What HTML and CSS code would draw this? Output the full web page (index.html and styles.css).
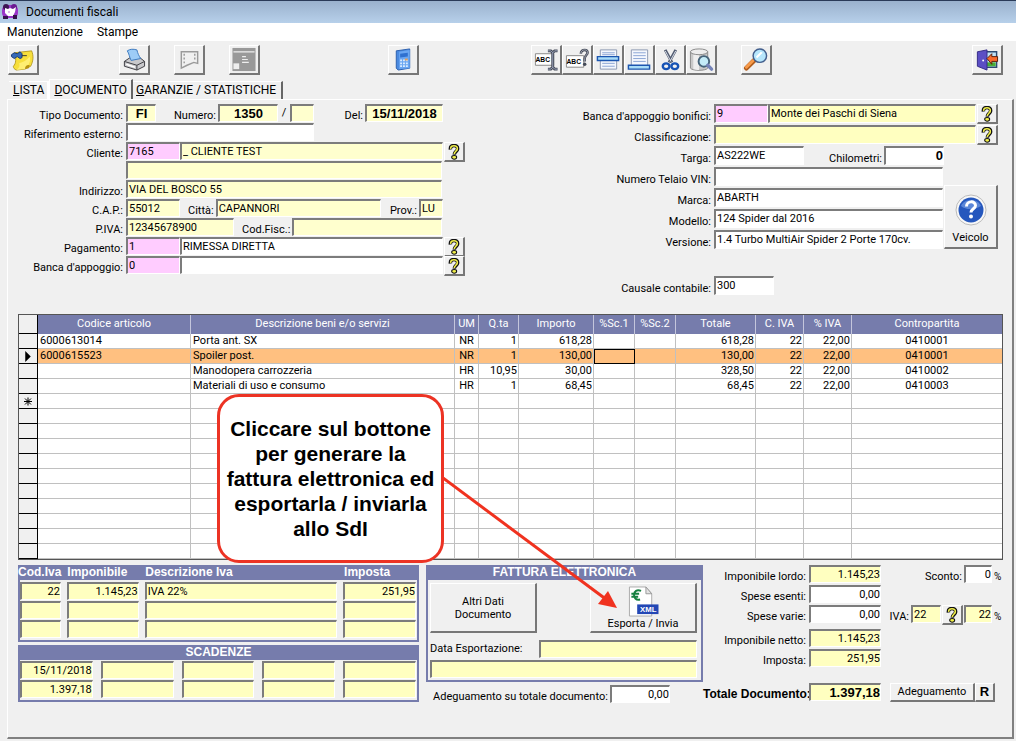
FILE: index.html
```html
<!DOCTYPE html>
<html lang="it">
<head>
<meta charset="utf-8">
<title>Documenti fiscali</title>
<link rel="stylesheet" href="styles.css">
</head>
<body>
<svg class="defs" aria-hidden="true">
  <symbol id="help" viewBox="0 0 12 18">
    <path d="M2 6.200C1.600 2.800 3.400 1.700 6 1.700S10.300 3 10 5.800C9.800 8.300 6.400 8.500 6.300 12" fill="none" stroke="#111" stroke-width="4"/>
    <path d="M2.300 5.500C2.100 3 3.600 1.900 6 1.900S10 3.200 9.700 5.500C9.500 8 6.300 8.500 6.300 11.300" fill="none" stroke="#f2f04a" stroke-width="1.800"/>
    <ellipse cx="6.200" cy="15" rx="2.800" ry="2.100" fill="#f2f04a" stroke="#111" stroke-width="1.200"/>
  </symbol>
</svg>

<header class="titlebar">
  <svg class="app-icon" viewBox="0 0 16 16"><rect x="0" y="1" width="16" height="13" rx="5" fill="#9a35c8"/><circle cx="4" cy="3" r="3" fill="#3d1552"/><circle cx="12" cy="3" r="3" fill="#6a1a90"/><path d="M3 4l3 1 2-1 3 1 3-2-1 5-2 4H6L3 9z" fill="#fff"/><path d="M1 12h5v3H1zM11 11h4v4h-4z" fill="#35104a"/><circle cx="7" cy="8" r="1" fill="#d9a0e8"/></svg>
  <h1 class="title">Documenti fiscali</h1>
</header>
<nav class="menubar">
  <button class="menu">Manutenzione</button>
  <button class="menu">Stampe</button>
</nav>

<div class="toolbar">
  <button class="tool" aria-label="Note"><svg viewBox="0 0 26 26"><path d="M4 6l18-2c2 5 2 10-1 16l-6 3-9 1c-2-1-3-2-3-4 3-3 3-8 1-14z" fill="#f7df3c" stroke="#a98b10" stroke-width=".8"/><path d="M9 17c4-1 8-3 11-7 1 4 0 9-5 13l-9 1c3-2 4-4 3-7z" fill="#ffef72"/><path d="M15 23c0-3 2-5 5-4l-1 3z" fill="#b89310"/><path d="M1 8l3-2 3 1 3-2 2 2v4l-2 1-3-2-3 2-3-2z" fill="#3569b8" stroke="#143777"/><path d="M12 9h5" stroke="#333"/></svg></button>
  <button class="tool tool-print" aria-label="Stampa"><svg viewBox="0 0 26 26"><path d="M3 15l6-4h10l5 4v5l-8 4-13-4z" fill="#c9c9cc" stroke="#3c3c42"/><path d="M6 4c3-2 6-2 10-1 1 4 2 6 4 9l-10 2C8 10 8 7 6 4z" fill="#9dccf7" stroke="#3b79be"/><path d="M3 15l13 4 8-4M16 19v5" fill="none" stroke="#3c3c42"/><path d="M5 18l9 3" stroke="#fff" stroke-width="1.500"/></svg></button>
  <button class="tool gap-m" aria-label="Anteprima" disabled><svg viewBox="0 0 26 26"><path d="M5 5h17v12l-4-1-7 3-6 3z" fill="none" stroke="#9a9a9a" stroke-width="1.500"/><path d="M8 7v11M19 7v8" stroke="#9a9a9a" stroke-width="1.500" stroke-dasharray="2 2"/></svg></button>
  <button class="tool gap-m" aria-label="Finestra" disabled><svg viewBox="0 0 26 26"><path d="M1 1h24v24H1z" fill="#999"/><path d="M2 5h22M11 10h4M11 13h6M11 16h7" stroke="#eee" stroke-width="1.200"/><path d="M2 17h6v6H2z" fill="#eee"/></svg></button>
  <button class="tool gap-xl" aria-label="Calcolatrice"><svg viewBox="0 0 26 26"><path d="M6 4l14-2v20L8 24l-2-2z" fill="#4a8ae0" stroke="#2b5fae"/><path d="M9 5l11-2v19L9 23z" fill="#6aa6f2"/><path d="M10 7l8-1v4l-8 1z" fill="#2f70cf"/><path d="M10 14h8M10 17h8M10 20h8" stroke="#d9ebff" stroke-width="1.800" stroke-dasharray="2 1"/><path d="M15 12h3v2h-3z" fill="#e0a060"/></svg></button>
  <button class="tool gap-l" aria-label="Rinomina"><svg viewBox="0 0 26 26"><path d="M2 7h19v12H2z" fill="#fff" stroke="#888"/><text class="abc" x="2" y="16">ABC</text><path d="M15 4h3l2 2 2-2h3M15 23h3l2-2 2 2h3M20 5v17" fill="none" stroke="#444a58" stroke-width="3"/><path d="M15 4h3l2 2 2-2h3M15 23h3l2-2 2 2h3M20 5v17" fill="none" stroke="#9aa2b8"/></svg></button>
  <button class="tool" aria-label="Controllo testo"><svg viewBox="0 0 26 26"><path d="M2 9h18v12H2z" fill="#fff" stroke="#888"/><text class="abc" x="2" y="18">ABC</text><path d="M17 7c0-3 2-4 4-4s3 1 3 3-3 3-3 6v3" fill="none" stroke="#444a58" stroke-width="2.600"/><path d="M17 7c0-3 2-4 4-4s3 1 3 3-3 3-3 6v3" fill="none" stroke="#b3b8c6" stroke-width=".8"/><circle cx="21" cy="18" r="1.800" fill="#444a58"/></svg></button>
  <button class="tool" aria-label="Inserisci riga"><svg viewBox="0 0 26 26"><path d="M5 3h17v20H5z" fill="#f4f7fd" stroke="#8b98b2"/><path d="M7 6h13M7 8h13M7 17h13M7 20h13" stroke="#8aa4d4"/><path d="M2 10h22v4H2z" fill="#a8dcf8" stroke="#1c56b0" stroke-width="1.500"/></svg></button>
  <button class="tool" aria-label="Aggiungi riga"><svg viewBox="0 0 26 26"><path d="M5 3h17v18H5z" fill="#f4f7fd" stroke="#8b98b2"/><path d="M7 6h13M7 9h13M7 12h13M7 15h13" stroke="#8aa4d4"/><path d="M2 19h22v4H2z" fill="#a8dcf8" stroke="#1c56b0" stroke-width="1.500"/></svg></button>
  <button class="tool" aria-label="Taglia"><svg viewBox="0 0 26 26"><path d="M8 3l7 13M19 3l-7 13" stroke="#515b70" stroke-width="3"/><path d="M8 4l6 11M19 4l-6 11" stroke="#dde2ec"/><ellipse cx="9" cy="20" rx="3.500" ry="3" fill="none" stroke="#1753b5" stroke-width="2.500"/><ellipse cx="18" cy="20" rx="3.500" ry="3" fill="none" stroke="#1753b5" stroke-width="2.500"/></svg></button>
  <button class="tool" aria-label="Cerca in archivio"><svg viewBox="0 0 26 26"><path d="M2 5v17c2 3 16 3 18 0V5z" fill="#c9c9c9" stroke="#888"/><path d="M5 6v17c2 1 4 1 6 1V6z" fill="#eee"/><ellipse cx="11" cy="5" rx="9" ry="3" fill="#ededed" stroke="#888"/><circle cx="16" cy="15" r="5.500" fill="#c4ecf8" stroke="#46647a" stroke-width="2"/><path d="M20 19l4 4" stroke="#7584b8" stroke-width="3.500" stroke-linecap="round"/></svg></button>
  <button class="tool gap-m" aria-label="Cerca"><svg viewBox="0 0 26 26"><path d="M11 14l-8 8" stroke="#b05c1c" stroke-width="5" stroke-linecap="round"/><path d="M10 14l-7 7" stroke="#f79b4b" stroke-width="3" stroke-linecap="round"/><circle cx="17" cy="9" r="7" fill="#b6e6fc" stroke="#435f8d" stroke-width="1.500"/><path d="M13 10l5-5 2 1-6 6z" fill="#fff"/></svg></button>
  <button class="tool tool-exit" aria-label="Esci"><svg viewBox="0 0 26 26"><path d="M12 5h11v16H12z" fill="#bfe2f8" stroke="#2d4a70" stroke-width="1.500"/><path d="M13 16h9v4h-9z" fill="#49b035"/><path d="M3 5l10-2v21L3 20z" fill="#5b4fc4" stroke="#352b87"/><circle cx="9" cy="14" r="1" fill="#fff"/><path d="M13 12l5-5v3h6v5h-6v3z" fill="#f9692b" stroke="#5a1e08"/></svg></button>
</div>

<div class="tabs" role="tablist">
  <button class="tab tab-first" role="tab"><u>L</u>ISTA</button>
  <button class="tab tab-active" role="tab" aria-selected="true"><u>D</u>OCUMENTO</button>
  <button class="tab" role="tab"><u>G</u>ARANZIE / STATISTICHE</button>
</div>

<main class="panel">
  <form class="form">
    <div class="column">
      <div class="row">
        <label class="caption" for="tipo">Tipo Documento:</label>
        <input class="field pale bold center w30" id="tipo" value="FI">
        <label class="sub far" for="numero">Numero:</label>
        <input class="field pale bold center w60" id="numero" value="1350">
        <span class="slash">/</span>
        <input class="field pale w24" aria-label="Suffisso numero">
        <label class="sub push" for="del">Del:</label>
        <input class="field pale bold center w78" id="del" value="15/11/2018">
        <span class="space"></span>
      </div>
      <div class="row">
        <label class="caption" for="rif">Riferimento esterno:</label>
        <input class="field w188" id="rif">
      </div>
      <div class="row">
        <label class="caption" for="cliente">Cliente:</label>
        <input class="field pink w54" id="cliente" value="7165">
        <input class="field pale grow" aria-label="Nome cliente" value="_ CLIENTE TEST">
        <button type="button" class="ask" aria-label="Cerca cliente"><svg><use href="#help"/></svg></button>
      </div>
      <div class="row">
        <span class="caption"></span>
        <input class="field pale grow" aria-label="Nome cliente, seconda riga">
        <span class="space"></span>
      </div>
      <div class="row">
        <label class="caption" for="indirizzo">Indirizzo:</label>
        <input class="field pale grow" id="indirizzo" value="VIA DEL BOSCO 55">
        <span class="space"></span>
      </div>
      <div class="row">
        <label class="caption" for="cap">C.A.P.:</label>
        <input class="field pale w54" id="cap" value="55012">
        <label class="sub near" for="citta">Città:</label>
        <input class="field pale grow" id="citta" value="CAPANNORI">
        <label class="sub near" for="prov">Prov.:</label>
        <input class="field pale w24" id="prov" value="LU">
        <span class="space"></span>
      </div>
      <div class="row">
        <label class="caption" for="piva">P.IVA:</label>
        <input class="field pale w108" id="piva" value="12345678900">
        <label class="sub near" for="cf">Cod.Fisc.:</label>
        <input class="field pale grow" id="cf">
        <span class="space"></span>
      </div>
      <div class="row">
        <label class="caption" for="pagamento">Pagamento:</label>
        <input class="field pink w54" id="pagamento" value="1">
        <input class="field grow" aria-label="Descrizione pagamento" value="RIMESSA DIRETTA">
        <button type="button" class="ask" aria-label="Cerca pagamento"><svg><use href="#help"/></svg></button>
      </div>
      <div class="row">
        <label class="caption" for="banca">Banca d'appoggio:</label>
        <input class="field pink w54" id="banca" value="0">
        <input class="field grow" aria-label="Descrizione banca">
        <button type="button" class="ask" aria-label="Cerca banca"><svg><use href="#help"/></svg></button>
      </div>
    </div>

    <div class="column column-right">
      <div class="row">
        <label class="caption wide" for="bonifici">Banca d'appoggio bonifici:</label>
        <input class="field pink w54" id="bonifici" value="9">
        <input class="field yellow grow" aria-label="Nome banca" value="Monte dei Paschi di Siena">
        <button type="button" class="ask" aria-label="Cerca banca bonifici"><svg><use href="#help"/></svg></button>
      </div>
      <div class="row">
        <label class="caption wide" for="classe">Classificazione:</label>
        <input class="field yellow grow" id="classe">
        <button type="button" class="ask" aria-label="Cerca classificazione"><svg><use href="#help"/></svg></button>
      </div>
      <div class="vehicle">
        <div class="column-right vehicle-fields">
          <div class="row">
            <label class="caption wide" for="targa">Targa:</label>
            <input class="field w90" id="targa" value="AS222WE">
            <label class="sub push" for="km">Chilometri:</label>
            <input class="field bold right w60" id="km" value="0">
          </div>
          <div class="row"><label class="caption wide" for="vin">Numero Telaio VIN:</label><input class="field grow" id="vin"></div>
          <div class="row"><label class="caption wide" for="marca">Marca:</label><input class="field grow" id="marca" value="ABARTH"></div>
          <div class="row"><label class="caption wide" for="modello">Modello:</label><input class="field grow" id="modello" value="124 Spider dal 2016"></div>
          <div class="row"><label class="caption wide" for="versione">Versione:</label><input class="field grow" id="versione" value="1.4 Turbo MultiAir Spider 2 Porte 170cv."></div>
        </div>
        <button type="button" class="button vehicle-button">
          <svg class="vehicle-icon" viewBox="0 0 32 32"><circle cx="16" cy="16" r="15" fill="#f8f8f8" stroke="#bbb"/><circle cx="16" cy="16" r="12.500" fill="#2557bd"/><path d="M6 12c3-8 17-8 20 0-5 3-14 5-20 0z" fill="#5b87d8"/><path d="M11.500 12.500c0-6 9-6 9-1 0 3.500-4.500 3-4.500 7" fill="none" stroke="#fff" stroke-width="3"/><circle cx="16" cy="22.500" r="2" fill="#fff"/></svg>
          Veicolo
        </button>
      </div>
      <div class="row causale">
        <label class="caption wide" for="causale">Causale contabile:</label>
        <input class="field w60" id="causale" value="300">
      </div>
    </div>
  </form>

  <section class="detail">
    <table class="grid">
      <colgroup><col class="c20"><col class="c153"><col><col class="c24"><col class="c40"><col class="c75"><col class="c41"><col class="c41"><col class="c80"><col class="c48"><col class="c48"><col class="c151"></colgroup>
      <thead><tr><th class="sel"></th><th>Codice articolo</th><th>Descrizione beni e/o servizi</th><th>UM</th><th>Q.ta</th><th>Importo</th><th>%Sc.1</th><th>%Sc.2</th><th>Totale</th><th>C. IVA</th><th>% IVA</th><th>Contropartita</th></tr></thead>
      <tbody>
        <tr><td class="sel"></td><td>6000613014</td><td>Porta ant. SX</td><td class="mid">NR</td><td class="num">1</td><td class="num">618,28</td><td></td><td></td><td class="num">618,28</td><td class="num">22</td><td class="num">22,00</td><td class="mid">0410001</td></tr>
        <tr class="current"><td class="sel"><svg class="mark" viewBox="0 0 8 12"><path d="M1 0l6 6-6 6z"/></svg></td><td>6000615523</td><td>Spoiler post.</td><td class="mid">NR</td><td class="num">1</td><td class="num">130,00</td><td class="focus"></td><td></td><td class="num">130,00</td><td class="num">22</td><td class="num">22,00</td><td class="mid">0410001</td></tr>
        <tr><td class="sel"></td><td></td><td>Manodopera carrozzeria</td><td class="mid">HR</td><td class="num">10,95</td><td class="num">30,00</td><td></td><td></td><td class="num">328,50</td><td class="num">22</td><td class="num">22,00</td><td class="mid">0410002</td></tr>
        <tr><td class="sel"></td><td></td><td>Materiali di uso e consumo</td><td class="mid">HR</td><td class="num">1</td><td class="num">68,45</td><td></td><td></td><td class="num">68,45</td><td class="num">22</td><td class="num">22,00</td><td class="mid">0410003</td></tr>
        <tr><td class="sel"><svg class="mark" viewBox="0 0 10 10"><path d="M5 1v8M1 5h8M2 2l6 6M8 2L2 8" stroke="#000"/></svg></td><td></td><td></td><td></td><td></td><td></td><td></td><td></td><td></td><td></td><td></td><td></td></tr>
        <tr><td class="sel"></td><td></td><td></td><td></td><td></td><td></td><td></td><td></td><td></td><td></td><td></td><td></td></tr>
        <tr><td class="sel"></td><td></td><td></td><td></td><td></td><td></td><td></td><td></td><td></td><td></td><td></td><td></td></tr>
        <tr><td class="sel"></td><td></td><td></td><td></td><td></td><td></td><td></td><td></td><td></td><td></td><td></td><td></td></tr>
        <tr><td class="sel"></td><td></td><td></td><td></td><td></td><td></td><td></td><td></td><td></td><td></td><td></td><td></td></tr>
        <tr><td class="sel"></td><td></td><td></td><td></td><td></td><td></td><td></td><td></td><td></td><td></td><td></td><td></td></tr>
        <tr><td class="sel"></td><td></td><td></td><td></td><td></td><td></td><td></td><td></td><td></td><td></td><td></td><td></td></tr>
        <tr><td class="sel"></td><td></td><td></td><td></td><td></td><td></td><td></td><td></td><td></td><td></td><td></td><td></td></tr>
        <tr><td class="sel"></td><td></td><td></td><td></td><td></td><td></td><td></td><td></td><td></td><td></td><td></td><td></td></tr>
        <tr><td class="sel"></td><td></td><td></td><td></td><td></td><td></td><td></td><td></td><td></td><td></td><td></td><td></td></tr>
        <tr><td class="sel"></td><td></td><td></td><td></td><td></td><td></td><td></td><td></td><td></td><td></td><td></td><td></td></tr>
      </tbody>
    </table>
    <aside class="callout">Cliccare sul bottone per generare la fattura elettronica ed esportarla / inviarla allo SdI</aside>
    <svg class="arrow" viewBox="0 0 180 140"><path d="M0 4L164 126" stroke="#f0321f" stroke-width="3"/><path d="M174 134l-19-4 10-13z" fill="#f0321f"/></svg>
  </section>

  <section class="bottom">
    <div class="stack stack-left">
      <div class="box">
        <div class="box-head iva-cols"><span>Cod.Iva</span><span>Imponibile</span><span>Descrizione Iva</span><span>Imposta</span></div>
        <div class="box-body iva-cols">
          <input class="field yellow right" aria-label="Codice IVA 1" value="22"><input class="field yellow right" aria-label="Imponibile 1" value="1.145,23"><input class="field yellow" aria-label="Descrizione IVA 1" value="IVA 22%"><input class="field yellow right" aria-label="Imposta 1" value="251,95">
          <input class="field yellow" aria-label="Codice IVA 2"><input class="field yellow" aria-label="Imponibile 2"><input class="field yellow" aria-label="Descrizione IVA 2"><input class="field yellow" aria-label="Imposta 2">
          <input class="field yellow" aria-label="Codice IVA 3"><input class="field yellow" aria-label="Imponibile 3"><input class="field yellow" aria-label="Descrizione IVA 3"><input class="field yellow" aria-label="Imposta 3">
        </div>
      </div>
      <div class="box">
        <div class="box-head box-title">SCADENZE</div>
        <div class="box-body due-cols">
          <input class="field yellow right" aria-label="Data scadenza 1" value="15/11/2018"><input class="field yellow" aria-label="Data scadenza 2"><input class="field yellow" aria-label="Data scadenza 3"><input class="field yellow" aria-label="Data scadenza 4"><input class="field yellow" aria-label="Data scadenza 5">
          <input class="field yellow right" aria-label="Importo scadenza 1" value="1.397,18"><input class="field yellow" aria-label="Importo scadenza 2"><input class="field yellow" aria-label="Importo scadenza 3"><input class="field yellow" aria-label="Importo scadenza 4"><input class="field yellow" aria-label="Importo scadenza 5">
        </div>
      </div>
    </div>

    <div class="stack">
      <div class="box">
        <div class="box-head box-title">FATTURA ELETTRONICA</div>
        <div class="invoice">
          <div class="invoice-buttons">
            <button class="button invoice-button">Altri Dati<br>Documento</button>
            <button class="button invoice-button">
              <svg class="xml-icon" viewBox="0 0 32 32"><path d="M2 1h17l6 7v23H2z" fill="#fff" stroke="#aaa"/><path d="M19 1v7h6z" fill="#e4e4e4" stroke="#999"/><path d="M14 5c-9-4-10 11-1 9M4 8h8M4 11h7" fill="none" stroke="#168040" stroke-width="2"/><path d="M10 19h22v10H10z" fill="#2347b5"/><text class="xml-text" x="13" y="27">XML</text></svg>
              Esporta / Invia
            </button>
          </div>
          <div class="row">
            <label class="sub grow export-label" for="dataexp">Data Esportazione:</label>
            <input class="field yellow w158" id="dataexp">
          </div>
          <input class="field yellow" aria-label="Esito esportazione">
        </div>
      </div>
      <div class="row adjust">
        <label class="sub" for="adeg">Adeguamento su totale documento:</label>
        <input class="field right w60" id="adeg" value="0,00">
      </div>
    </div>

    <div class="totals">
      <div class="row">
        <label class="caption total" for="lordo">Imponibile lordo:</label>
        <input class="field yellow right w72" id="lordo" value="1.145,23">
        <label class="sub push" for="sconto">Sconto:</label>
        <input class="field right w28" id="sconto" value="0"><span class="percent">%</span>
      </div>
      <div class="row"><label class="caption total" for="esenti">Spese esenti:</label><input class="field right w72" id="esenti" value="0,00"></div>
      <div class="row">
        <label class="caption total" for="varie">Spese varie:</label>
        <input class="field right w72" id="varie" value="0,00">
        <label class="sub push" for="iva">IVA:</label>
        <input class="field yellow w30" id="iva" value="22">
        <button class="ask ask-rate" aria-label="Cerca aliquota"><svg><use href="#help"/></svg></button>
        <input class="field yellow right w28" aria-label="Aliquota IVA" value="22"><span class="percent">%</span>
      </div>
      <div class="row net"><label class="caption total" for="netto">Imponibile netto:</label><input class="field yellow right w72" id="netto" value="1.145,23"></div>
      <div class="row"><label class="caption total" for="imposta">Imposta:</label><input class="field yellow right w72" id="imposta" value="251,95"></div>
      <div class="row grand">
        <label class="caption total grand-label" for="totale">Totale Documento:</label>
        <input class="field yellow right bold w72" id="totale" value="1.397,18">
        <button class="button adjust-button">Adeguamento</button><button class="button bold r-button">R</button>
      </div>
    </div>
  </section>
</main>
</body>
</html>
```
FILE: styles.css
```css
* { box-sizing: border-box; }

body {
  margin: 0;
  min-height: 100vh;
  display: flex;
  flex-direction: column;
  background: #f0f0f0;
  color: #000;
  font: 11px/12px Roboto, "Liberation Sans", Arial, sans-serif;
}

button, input { font: inherit; color: inherit; margin: 0; }
.defs { position: absolute; width: 0; height: 0; }

/* Window chrome */
.titlebar {
  display: flex;
  align-items: center;
  gap: 8px;
  height: 23px;
  padding-left: 2px;
  border-top: 1px solid #2a3a58;
  background: linear-gradient(#9ab1cd, #b7d0ea);
}
.app-icon { width: 16px; height: 16px; }
.title { margin: 0; font: 12px/16px Roboto, "Noto Sans", sans-serif; }
.menubar { display: flex; gap: 14px; height: 18px; padding-left: 7px; background: #fff; }
.menu { padding: 0; border: 0; background: none; font: 12px/18px Roboto, "Noto Sans", sans-serif; }

.toolbar { display: flex; padding: 4px 13px 4px 8px; }
.tool {
  width: 31px;
  height: 30px;
  padding: 1px;
  border: solid;
  border-width: 1px 2px 2px 1px;
  border-color: #fff #777 #777 #fff;
  background: #f0f0f0;
}
.tool svg { display: block; width: 26px; height: 25px; }
.tool-print { margin-left: 80px; }
.gap-m { margin-left: 24px; }
.gap-l { margin-left: 112px; }
.gap-xl { margin-left: 128px; }
.tool-exit { margin-left: auto; }
.abc { font: bold 7px "Liberation Sans", sans-serif; }

.tabs { display: flex; align-items: flex-end; height: 20px; padding-left: 9px; }
.tab {
  height: 18px;
  padding: 0 5px 1px 3px;
  border: solid;
  border-width: 1px 2px 0 0;
  border-color: #fff #666 #fff #fff;
  background: #f0f0f0;
  font: 12px/15px Roboto, "Liberation Sans", sans-serif;
}
.tab-first { padding-left: 4px; padding-right: 3px; border-right-color: #fff; }
.tab-active { height: 20px; padding: 1px 4px 0; border-left-width: 1px; }

/* Document panel */
.panel {
  flex: 1;
  margin: 0 2px 2px 7px;
  padding: 4px 9px 20px 10px;
  border: solid;
  border-width: 1px 2px 2px 1px;
  border-color: #fff #808080 #808080 #fff;
}
.form {
  display: grid;
  grid-template-columns: 447fr 533fr;
  margin-right: 5px;
}
.column { display: flex; flex-direction: column; gap: 1px; min-width: 0; }
.column-right { display: flex; flex-direction: column; gap: 2px; min-width: 0; }
.column-right .row { height: 19px; }
.row { display: flex; height: 18px; align-items: stretch; }

.caption, .sub { align-self: flex-end; white-space: nowrap; padding-right: 2px; }
.caption { width: 108px; text-align: right; padding-right: 3px; flex: none; }
.caption.wide { width: 249px; }
.push { margin-left: auto; }
.near { margin-left: 8px; }
.far { margin-left: 18px; }
.slash { width: 12px; text-align: center; line-height: 18px; }
.space { width: 22px; flex: none; }
.grow { flex: 1; }

.field {
  min-width: 0;
  width: 100%;
  height: 18px;
  padding: 0 1px 1px;
  border: solid;
  border-width: 2px 1px 1px 2px;
  border-color: #7c7c7c #fff #fff #7c7c7c;
  border-radius: 0;
  background: #fff;
}
.column-right .field { height: 19px; }
.pale { background: #ffffce; }
.yellow { background: #ffffc0; }
.pink { background: #ffccff; }
.bold { font-family: "Liberation Sans", Arial, sans-serif; font-weight: bold; font-size: 13px; }
.right { text-align: right; padding-right: 0; }
.center { text-align: center; }

.field.grow { width: auto; margin-right: 1px; }
.w24, .w28, .w30, .w54, .w60, .w72, .w78, .w90, .w108, .w158, .w188 { flex: none; }
.w24 { width: 24px; }
.w28 { width: 28px; }
.w30 { width: 30px; }
.w54 { width: 54px; }
.w60 { width: 60px; }
.w72 { width: 72px; }
.w78 { width: 78px; }
.w90 { width: 90px; }
.w108 { width: 108px; }
.w158 { width: 158px; }
.w188 { width: 188px; }

.button, .ask {
  padding: 0;
  border: solid;
  border-width: 1px 2px 2px 1px;
  border-color: #fff #777 #777 #fff;
  background: #f0f0f0;
}
.ask { width: 21px; height: 20px; flex: none; }
.ask svg { display: block; width: 12px; height: 16px; margin: 0 auto; }
.ask-rate { margin: 0 1px; }

.vehicle { display: flex; align-items: flex-end; }
.vehicle-fields { flex: 1; }
.vehicle-button { display: flex; flex-direction: column; align-items: center; justify-content: flex-end; gap: 6px; width: 54px; height: 64px; padding-bottom: 3px; }
.vehicle-icon { width: 32px; height: 32px; }
.causale { margin-top: 25px; }

/* Item grid */
.detail { position: relative; margin-top: 19px; }
.grid {
  width: 100%;
  table-layout: fixed;
  border-collapse: separate;
  border-spacing: 0;
  border: 1px solid #555;
  background: #fff;
}
.grid th {
  height: 19px;
  padding: 0 0 2px;
  border-right: 1px solid #c4c6dc;
  background: #767cac;
  color: #fff;
  font-weight: normal;
}
.grid td {
  height: 15px;
  padding: 0 2px;
  border-right: 1px solid #c0c0c0;
  border-bottom: 1px solid #c0c0c0;
  line-height: 14px;
  white-space: nowrap;
  overflow: hidden;
}
.grid th:last-child, .grid td:last-child { border-right: 0; }
.grid .sel { padding: 0; border-right: 1px solid #000; border-bottom: 1px solid #000; background: #f0f0f0; text-align: center; }
.grid .num { text-align: right; padding-right: 1px; }
.grid .mid { text-align: center; padding: 0; }
.grid .current td:not(.sel) { background: #ffc080; }
.grid .current .focus { border: 1px solid #000; }
.mark { display: block; width: 10px; height: 11px; margin: 0 auto; }
.c20 { width: 19px; }
.c24 { width: 24px; }
.c40 { width: 40px; }
.c41 { width: 41px; }
.c48 { width: 48px; }
.c75 { width: 75px; }
.c80 { width: 80px; }
.c151 { width: 150px; }
.c153 { width: 153px; }

.callout {
  position: absolute;
  left: 199px;
  top: 80px;
  width: 227px;
  height: 169px;
  padding: 19px 2px;
  border: 3px solid #ec3324;
  border-radius: 22px;
  background: #fff;
  text-align: center;
  font: bold 21px/25px "Liberation Sans", Arial, sans-serif;
}
.arrow { position: absolute; left: 425px; top: 160px; width: 180px; height: 140px; }

/* Summary area */
.bottom { display: grid; grid-template-columns: 408fr 277fr 300fr; margin-top: 5px; }
.stack { display: flex; flex-direction: column; gap: 3px; min-width: 0; }
.stack-left { padding-right: 7px; }
.box { border: 2px solid #767cac; border-top: 0; background: #f0f0f0; }
.box-head { height: 15px; background: #767cac; color: #fff; font: bold 12px/14px "Liberation Sans", Arial, sans-serif; white-space: nowrap; }
.box-title { text-align: center; }
.iva-cols { display: grid; grid-template-columns: 41fr 72fr 193fr 73fr; column-gap: 6px; }
.box-head.iva-cols { margin-left: -2px; }
.due-cols { display: grid; grid-template-columns: repeat(5, 1fr); column-gap: 8px; }
.box-body { row-gap: 1px; padding: 1px 1px 2px 0; }
.iva-cols.box-body { padding-top: 2px; }

.invoice { display: flex; flex-direction: column; gap: 2px; padding: 3px 4px 2px 2px; }
.invoice-buttons { display: flex; justify-content: space-between; margin-bottom: 5px; }
.invoice-button { display: flex; flex-direction: column; align-items: center; justify-content: center; width: 107px; height: 50px; line-height: 13px; }
.xml-icon { width: 32px; height: 31px; }
.xml-text { font: bold 8px "Liberation Sans", sans-serif; fill: #fff; }
.export-label { align-self: center; }
.adjust { padding-left: 7px; }

.totals { display: flex; flex-direction: column; gap: 2px; min-width: 0; }
.total { width: 106px; }
.percent { width: 11px; padding-left: 2px; align-self: flex-end; font-size: 10px; }
.net { margin-top: 4px; }
.grand { margin-top: 14px; }
.grand-label { padding-right: 0; font: bold 12px/14px "Liberation Sans", Arial, sans-serif; }
.adjust-button { width: 85px; height: 19px; margin-left: 9px; }
.r-button { width: 20px; height: 19px; }
```
